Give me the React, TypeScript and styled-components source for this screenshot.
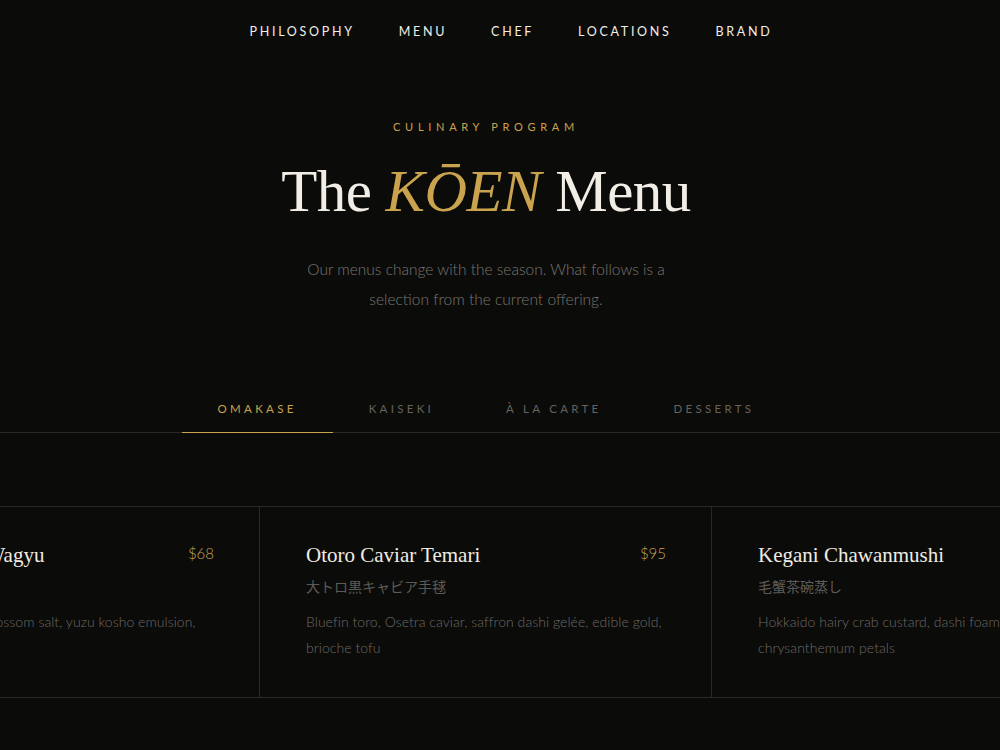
import * as React from 'react'
import styled, { createGlobalStyle } from 'styled-components'

const gold = '#c9a34e'
const line = '#2a2926'
const sans = `'Lato', 'Noto Sans CJK JP', sans-serif`
const serif = `'Liberation Serif', 'Noto Sans CJK JP', serif`

const GlobalStyle = createGlobalStyle`
    html, body {
        margin: 0;
        background: #0b0b0a;
    }
    body {
        font-family: ${sans};
        color: #ece8df;
        overflow: hidden;
    }
`

const Page = styled.div`
    width: 1000px;
    height: 750px;
    overflow: hidden;
`

const Nav = styled.nav`
    display: flex;
    justify-content: center;
    gap: 44px;
    padding: 24px 0 0 22px;
    height: 40px;
`

const NavLink = styled.a`
    font-size: 12.5px;
    font-weight: 400;
    line-height: 16px;
    letter-spacing: 2.7px;
    color: #f2eee6;
    text-transform: uppercase;
    text-decoration: none;
`

/* hero and tabs sit on a slightly left-weighted column */
const Column = styled.div`
    padding-right: 28px;
`

const Hero = styled.header`
    display: flex;
    flex-direction: column;
    align-items: center;
    padding-top: 56px;
`

const Eyebrow = styled.div`
    font-size: 11px;
    line-height: 14px;
    letter-spacing: 4.7px;
    color: ${gold};
    text-transform: uppercase;
`

const Title = styled.h1`
    margin: 22px 0 0;
    font-family: ${serif};
    font-weight: 400;
    font-size: 59px;
    line-height: 70px;
    color: #f2eee6;
    letter-spacing: -0.5px;

    em {
        color: ${gold};
        font-style: italic;
    }
`

const Intro = styled.p`
    margin: 28px 0 0;
    width: 370px;
    text-align: center;
    font-size: 15.5px;
    font-weight: 300;
    line-height: 30px;
    color: #7a766f;
`

const TabBar = styled.div`
    display: flex;
    justify-content: center;
    margin-top: 88px;
`

const TabRule = styled.div`
    border-bottom: 1px solid ${line};
`

const TabButton = styled.button<{ $active?: boolean }>`
    padding: 0 36px 16px;
    margin-bottom: -1px;
    background: none;
    border: none;
    border-bottom: 1px solid ${(p) => (p.$active ? gold : 'transparent')};
    font-family: ${sans};
    font-size: 11.5px;
    line-height: 14px;
    letter-spacing: 3.3px;
    color: ${(p) => (p.$active ? gold : '#66635e')};
    text-transform: uppercase;
    cursor: pointer;
`

const Carousel = styled.section`
    margin-top: 73px;
    border-top: 1px solid ${line};
    border-bottom: 1px solid ${line};
    overflow: hidden;
`

const Track = styled.div`
    display: flex;
    width: max-content;
    transform: translateX(-192px);
`

const Card = styled.article`
    box-sizing: border-box;
    width: 452px;
    height: 190px;
    padding: 33px 45px 0 46px;
    border-right: 1px solid ${line};
`

const CardHead = styled.div`
    display: flex;
    justify-content: space-between;
    align-items: baseline;
`

const DishName = styled.h3`
    margin: 0;
    font-family: ${serif};
    font-weight: 400;
    font-size: 21px;
    line-height: 30px;
    color: #f0ece4;
`

const Price = styled.span`
    font-size: 15px;
    font-weight: 300;
    color: ${gold};
    transform: translateY(-3px);
`

const DishJp = styled.div`
    margin-top: 6px;
    font-family: 'Noto Sans CJK JP', sans-serif;
    font-size: 14px;
    line-height: 20px;
    color: #5e5b57;
`

const DishDesc = styled.p`
    margin: 13px 0 0;
    font-size: 14px;
    font-weight: 300;
    line-height: 26px;
    letter-spacing: 0.05px;
    color: #6d6a65;
`

const tabs = ['Omakase', 'Kaiseki', 'À la carte', 'Desserts']

const dishes = [
    {
        name: 'A5 Kagoshima Wagyu',
        jp: '鹿児島牛',
        price: '$68',
        desc: 'Seared sirloin, cherry blossom salt, yuzu kosho emulsion, nanohana'
    },
    {
        name: 'Otoro Caviar Temari',
        jp: '大トロ黒キャビア手毬',
        price: '$95',
        desc: 'Bluefin toro, Osetra caviar, saffron dashi gelée, edible gold, brioche tofu'
    },
    {
        name: 'Kegani Chawanmushi',
        jp: '毛蟹茶碗蒸し',
        price: '$54',
        desc: 'Hokkaido hairy crab custard, dashi foam, chrysanthemum\u00a0petals'
    }
]

const App: React.FC = () => (
    <Page>
        <GlobalStyle />
        <Nav>
            {['Philosophy', 'Menu', 'Chef', 'Locations', 'Brand'].map((item) => (
                <NavLink key={item} href="#">
                    {item}
                </NavLink>
            ))}
        </Nav>
        <Column>
            <Hero>
                <Eyebrow>Culinary Program</Eyebrow>
                <Title>
                    The <em>KŌEN</em> Menu
                </Title>
                <Intro>
                    Our menus change with the season. What follows is a selection from
                    the current offering.
                </Intro>
            </Hero>
        </Column>
        <TabRule>
            <Column>
                <TabBar>
                    {tabs.map((tab, i) => (
                        <TabButton key={tab} $active={i === 0}>
                            {tab}
                        </TabButton>
                    ))}
                </TabBar>
            </Column>
        </TabRule>
        <Carousel>
            <Track>
                {dishes.map((dish) => (
                    <Card key={dish.name}>
                        <CardHead>
                            <DishName>{dish.name}</DishName>
                            <Price>{dish.price}</Price>
                        </CardHead>
                        <DishJp>{dish.jp}</DishJp>
                        <DishDesc>{dish.desc}</DishDesc>
                    </Card>
                ))}
            </Track>
        </Carousel>
    </Page>
)

export default App
